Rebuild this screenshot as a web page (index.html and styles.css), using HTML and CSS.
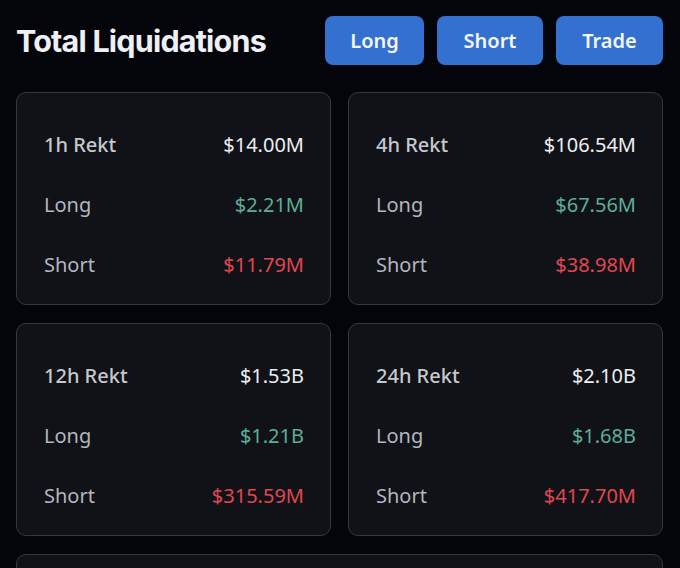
FILE: index.html
```html
<!DOCTYPE html>
<html lang="en">
<head>
<meta charset="utf-8">
<title>Total Liquidations</title>
<link rel="stylesheet" href="styles.css">
</head>
<body>
<main class="page">
  <header class="header">
    <h1 class="title">Total Liquidations</h1>
    <nav class="actions">
      <button class="btn btn-long">Long</button>
      <button class="btn btn-short">Short</button>
      <button class="btn btn-trade">Trade</button>
    </nav>
  </header>
  <section class="grid">
    <div class="card">
      <div class="row"><span class="label head">1h Rekt</span><span class="value">$14.00M</span></div>
      <div class="row"><span class="label">Long</span><span class="value up">$2.21M</span></div>
      <div class="row"><span class="label">Short</span><span class="value down">$11.79M</span></div>
    </div>
    <div class="card">
      <div class="row"><span class="label head">4h Rekt</span><span class="value">$106.54M</span></div>
      <div class="row"><span class="label">Long</span><span class="value up">$67.56M</span></div>
      <div class="row"><span class="label">Short</span><span class="value down">$38.98M</span></div>
    </div>
    <div class="card">
      <div class="row"><span class="label head">12h Rekt</span><span class="value">$1.53B</span></div>
      <div class="row"><span class="label">Long</span><span class="value up">$1.21B</span></div>
      <div class="row"><span class="label">Short</span><span class="value down">$315.59M</span></div>
    </div>
    <div class="card">
      <div class="row"><span class="label head">24h Rekt</span><span class="value">$2.10B</span></div>
      <div class="row"><span class="label">Long</span><span class="value up">$1.68B</span></div>
      <div class="row"><span class="label">Short</span><span class="value down">$417.70M</span></div>
    </div>
    <div class="card card-wide"></div>
  </section>
</main>
</body>
</html>
```
FILE: styles.css
```css
* { box-sizing: border-box; }
html, body {
  margin: 0;
  padding: 0;
  background: #04050a;
}
body {
  font-family: "Noto Sans", "Open Sans", sans-serif;
  color: #e9ecf0;
}
.page {
  height: 568px;
  overflow: hidden;
  padding: 16px 17px 0 16px;
}
.header {
  display: flex;
  align-items: center;
  justify-content: space-between;
  height: 49px;
  margin-bottom: 27px;
}
.title {
  margin: 0;
  font-family: "Inter", sans-serif;
  font-weight: 700;
  font-size: 30.5px;
  letter-spacing: -0.8px;
  color: #eef0f5;
}
.actions {
  display: flex;
  gap: 13px;
}
.btn {
  height: 49px;
  border: none;
  border-radius: 8px;
  background: #3370d0;
  color: #f4f7fc;
  font-family: "Noto Sans", sans-serif;
  font-weight: 600;
  font-size: 20px;
  padding: 0;
}
.btn-long { width: 99px; }
.btn-short { width: 106px; }
.btn-trade { width: 107px; }
.grid {
  display: grid;
  grid-template-columns: 315px 315px;
  column-gap: 17px;
  row-gap: 18px;
  grid-auto-rows: 213px;
}
.card {
  background: #101217;
  border: 1.5px solid #35383e;
  border-radius: 10px;
  padding: 21px 26px 0 27px;
  display: flex;
  flex-direction: column;
}
.card-wide {
  grid-column: 1 / span 2;
}
.row {
  height: 60px;
  display: flex;
  align-items: center;
  justify-content: space-between;
  font-size: 20px;
}
.label {
  color: #b3b7bf;
}
.label.head {
  font-weight: 500;
  color: #c5c8ce;
}
.value {
  color: #eceef2;
}
.value.up { color: #5cae96; }
.value.down { color: #e0474f; }
```
